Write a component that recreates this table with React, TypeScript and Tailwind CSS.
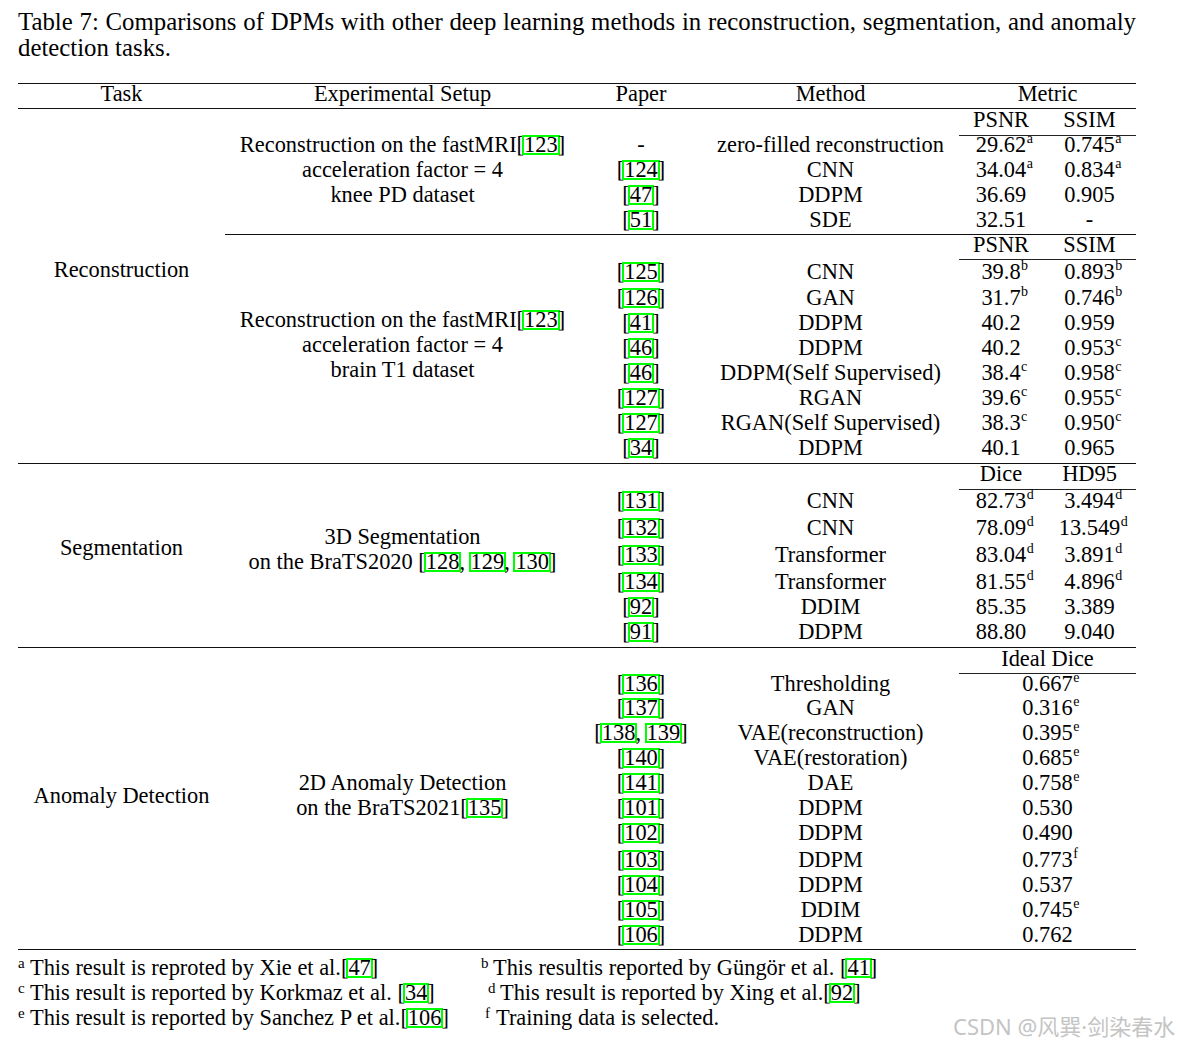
import React from 'react';

type Val = [string, string?];
type Row = { h: string; paper: React.ReactNode; method: string; vals: Val[] };

function Cite({ n }: { n: string }) {
  return (
    <span className="inline-block h-[16px] leading-[15px] outline-solid outline-[2px] outline-[#00ff00]">{n}</span>
  );
}

function Ref({ n }: { n: string }) {
  return (
    <>
      [<Cite n={n} />]
    </>
  );
}

// superscript takes no width, like \tnote
function V({ v }: { v: Val }) {
  return (
    <span className="relative">
      {v[0]}
      {v[1] && <span className="absolute left-full top-0 pl-[0.5px] text-[14px] leading-[14px]">{v[1]}</span>}
    </span>
  );
}

const knee: Row[] = [
  { h: 'h-[25px]', paper: '-', method: 'zero-filled reconstruction', vals: [['29.62', 'a'], ['0.745', 'a']] },
  { h: 'h-[25px]', paper: <Ref n="124" />, method: 'CNN', vals: [['34.04', 'a'], ['0.834', 'a']] },
  { h: 'h-[25px]', paper: <Ref n="47" />, method: 'DDPM', vals: [['36.69'], ['0.905']] },
  { h: 'h-[23px]', paper: <Ref n="51" />, method: 'SDE', vals: [['32.51'], ['-']] },
];

const brain: Row[] = [
  { h: 'h-[26px]', paper: <Ref n="125" />, method: 'CNN', vals: [['39.8', 'b'], ['0.893', 'b']] },
  { h: 'h-[25px]', paper: <Ref n="126" />, method: 'GAN', vals: [['31.7', 'b'], ['0.746', 'b']] },
  { h: 'h-[25px]', paper: <Ref n="41" />, method: 'DDPM', vals: [['40.2'], ['0.959']] },
  { h: 'h-[25px]', paper: <Ref n="46" />, method: 'DDPM', vals: [['40.2'], ['0.953', 'c']] },
  { h: 'h-[25px]', paper: <Ref n="46" />, method: 'DDPM(Self Supervised)', vals: [['38.4', 'c'], ['0.958', 'c']] },
  { h: 'h-[25px]', paper: <Ref n="127" />, method: 'RGAN', vals: [['39.6', 'c'], ['0.955', 'c']] },
  { h: 'h-[25px]', paper: <Ref n="127" />, method: 'RGAN(Self Supervised)', vals: [['38.3', 'c'], ['0.950', 'c']] },
  { h: 'h-[27px]', paper: <Ref n="34" />, method: 'DDPM', vals: [['40.1'], ['0.965']] },
];

const seg: Row[] = [
  { h: 'h-[27px]', paper: <Ref n="131" />, method: 'CNN', vals: [['82.73', 'd'], ['3.494', 'd']] },
  { h: 'h-[27px]', paper: <Ref n="132" />, method: 'CNN', vals: [['78.09', 'd'], ['13.549', 'd']] },
  { h: 'h-[27px]', paper: <Ref n="133" />, method: 'Transformer', vals: [['83.04', 'd'], ['3.891', 'd']] },
  { h: 'h-[25px]', paper: <Ref n="134" />, method: 'Transformer', vals: [['81.55', 'd'], ['4.896', 'd']] },
  { h: 'h-[25px]', paper: <Ref n="92" />, method: 'DDIM', vals: [['85.35'], ['3.389']] },
  { h: 'h-[26px]', paper: <Ref n="91" />, method: 'DDPM', vals: [['88.80'], ['9.040']] },
];

const anomaly: Row[] = [
  { h: 'h-[24px]', paper: <Ref n="136" />, method: 'Thresholding', vals: [['0.667', 'e']] },
  { h: 'h-[25px]', paper: <Ref n="137" />, method: 'GAN', vals: [['0.316', 'e']] },
  {
    h: 'h-[25px]',
    paper: (
      <>
        [<Cite n="138" />, <Cite n="139" />]
      </>
    ),
    method: 'VAE(reconstruction)',
    vals: [['0.395', 'e']],
  },
  { h: 'h-[25px]', paper: <Ref n="140" />, method: 'VAE(restoration)', vals: [['0.685', 'e']] },
  { h: 'h-[25px]', paper: <Ref n="141" />, method: 'DAE', vals: [['0.758', 'e']] },
  { h: 'h-[25px]', paper: <Ref n="101" />, method: 'DDPM', vals: [['0.530']] },
  { h: 'h-[27px]', paper: <Ref n="102" />, method: 'DDPM', vals: [['0.490']] },
  { h: 'h-[25px]', paper: <Ref n="103" />, method: 'DDPM', vals: [['0.773', 'f']] },
  { h: 'h-[25px]', paper: <Ref n="104" />, method: 'DDPM', vals: [['0.537']] },
  { h: 'h-[25px]', paper: <Ref n="105" />, method: 'DDIM', vals: [['0.745', 'e']] },
  { h: 'h-[24px]', paper: <Ref n="106" />, method: 'DDPM', vals: [['0.762']] },
];

function Rows({ rows, pt }: { rows: Row[]; pt: string }) {
  return (
    <>
      {rows.map((r, i) => (
        <div key={i} className={`grid grid-cols-[122px_257px_84px_93px] text-center leading-[18px] whitespace-nowrap ${r.h} ${pt}`}>
          <div>{r.paper}</div>
          <div>{r.method}</div>
          {r.vals.length === 1 ? (
            <div className="col-span-2">
              <V v={r.vals[0]} />
            </div>
          ) : (
            r.vals.map((v, j) => (
              <div key={j}>
                <V v={v} />
              </div>
            ))
          )}
        </div>
      ))}
    </>
  );
}

function SubHead({ h, pt, labels }: { h: string; pt: string; labels: string[] }) {
  return (
    <div className={`grid grid-cols-[122px_257px_177px] ${h}`}>
      <div className="col-start-3 border-b border-[#222]">
        <div className={`grid text-center leading-[18px] ${labels.length === 1 ? 'grid-cols-1' : 'grid-cols-[84px_93px]'} ${pt}`}>
          {labels.map((l) => (
            <div key={l}>{l}</div>
          ))}
        </div>
      </div>
    </div>
  );
}

const Rule = () => <div className="h-px bg-[#111]" />;

export default function App() {
  return (
    <div className="relative w-[1182px] h-[1048px] bg-white text-black font-['Liberation_Serif',serif] text-[22.4px] overflow-hidden">
      <div className="pl-[18px] pt-[9px] w-[1136px]">
        {/* Caption */}
        <p className="w-[1118px] h-[52px] text-justify text-[24.8px] leading-[26px]">
          Table 7: Comparisons of DPMs with other deep learning methods in reconstruction, segmentation, and anomaly detection tasks.
        </p>

        <div className="mt-[22px] w-[1118px]">
          <Rule />
          <div className="grid grid-cols-[207px_355px_122px_257px_177px] h-[24px] pt-[0.6px] leading-[18px] text-center">
            <div>Task</div>
            <div>Experimental Setup</div>
            <div>Paper</div>
            <div>Method</div>
            <div>Metric</div>
          </div>
          <Rule />

          {/* Reconstruction */}
          <div className="flex">
            <div className="w-[207px] shrink-0 text-center leading-[18px] pt-[151.6px]">Reconstruction</div>
            <div className="flex-1 flex flex-col">
              <div className="flex">
                <div className="w-[355px] shrink-0 text-center leading-[25px] pt-[23px]">
                  <div>
                    Reconstruction on the fastMRI<Ref n="123" />
                  </div>
                  <div>acceleration factor = 4</div>
                  <div>knee PD dataset</div>
                </div>
                <div className="flex-1">
                  <SubHead h="h-[27px]" pt="pt-[1.6px]" labels={['PSNR', 'SSIM']} />
                  <Rows rows={knee} pt="pt-0" />
                </div>
              </div>
              <Rule />
              <div className="flex">
                <div className="w-[355px] shrink-0 text-center leading-[25px] pt-[72px]">
                  <div>
                    Reconstruction on the fastMRI<Ref n="123" />
                  </div>
                  <div>acceleration factor = 4</div>
                  <div>brain T1 dataset</div>
                </div>
                <div className="flex-1">
                  <SubHead h="h-[25px]" pt="pt-[0.6px]" labels={['PSNR', 'SSIM']} />
                  <Rows rows={brain} pt="pt-[2.6px]" />
                </div>
              </div>
            </div>
          </div>
          <Rule />

          {/* Segmentation */}
          <div className="flex">
            <div className="w-[207px] shrink-0 text-center leading-[18px] pt-[74.6px]">Segmentation</div>
            <div className="w-[355px] shrink-0 text-center leading-[25px] pt-[60px]">
              <div>3D Segmentation</div>
              <div>
                on the BraTS2020 [<Cite n="128" />, <Cite n="129" />, <Cite n="130" />]
              </div>
            </div>
            <div className="flex-1">
              <SubHead h="h-[26px]" pt="pt-[0.6px]" labels={['Dice', 'HD95']} />
              <Rows rows={seg} pt="pt-[1.6px]" />
            </div>
          </div>
          <Rule />

          {/* Anomaly Detection */}
          <div className="flex">
            <div className="w-[207px] shrink-0 text-center leading-[18px] pt-[138.6px]">Anomaly Detection</div>
            <div className="w-[355px] shrink-0 text-center leading-[25px] pt-[122px]">
              <div>2D Anomaly Detection</div>
              <div>
                on the BraTS2021<Ref n="135" />
              </div>
            </div>
            <div className="flex-1">
              <SubHead h="h-[26px]" pt="pt-[1.6px]" labels={['Ideal Dice']} />
              <Rows rows={anomaly} pt="pt-[0.6px]" />
            </div>
          </div>
          <Rule />

          {/* Table notes */}
          <div className="mt-[5px] leading-[25px] whitespace-nowrap">
            <div className="flex">
              <div className="w-[463px] shrink-0">
                <span className="inline-block w-[12px] relative -top-[7px] text-[15px] leading-none">a</span>
                This result is reproted by Xie et al.<Ref n="47" />
              </div>
              <div>
                <span className="inline-block w-[12px] relative -top-[7px] text-[15px] leading-none">b</span>
                This resultis reported by Güngör et al. <Ref n="41" />
              </div>
            </div>
            <div className="flex">
              <div className="w-[463px] shrink-0">
                <span className="inline-block w-[12px] relative -top-[7px] text-[15px] leading-none">c</span>
                This result is reported by Korkmaz et al. <Ref n="34" />
              </div>
              <div className="pl-[7px]">
                <span className="inline-block w-[12px] relative -top-[7px] text-[15px] leading-none">d</span>
                This result is reported by Xing et al.<Ref n="92" />
              </div>
            </div>
            <div className="flex">
              <div className="w-[463px] shrink-0">
                <span className="inline-block w-[12px] relative -top-[7px] text-[15px] leading-none">e</span>
                This result is reported by Sanchez P et al.<Ref n="106" />
              </div>
              <div className="pl-[4px]">
                <span className="inline-block w-[11px] relative -top-[7px] text-[15px] leading-none">f</span>
                Training data is selected.
              </div>
            </div>
          </div>
        </div>
      </div>

      {/* watermark */}
      <div className="absolute left-[953px] top-[1013px] text-[22px] leading-[27px] text-[#c4c4c4] whitespace-nowrap font-['Noto_Sans','Noto_Sans_CJK_SC',sans-serif]">
        CSDN @风巽·剑染春水
      </div>
    </div>
  );
}
